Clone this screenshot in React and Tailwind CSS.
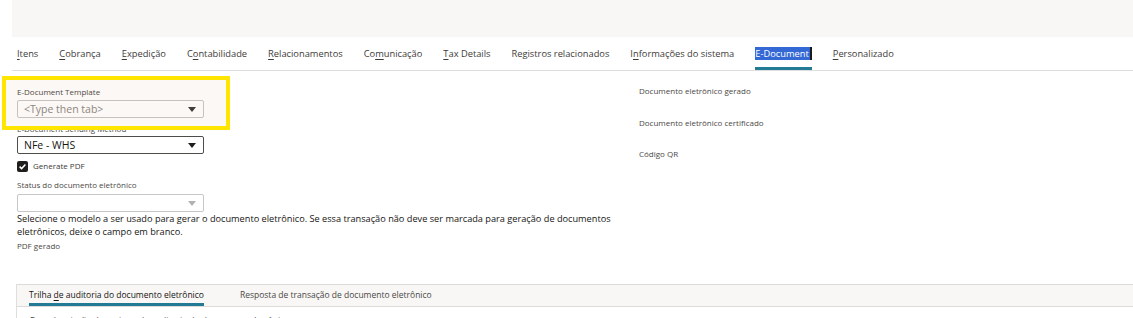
import React from 'react';

const tabs = [
  { pre: '', key: 'I', post: 'tens' },
  { pre: '', key: 'C', post: 'obrança' },
  { pre: '', key: 'E', post: 'xpedição' },
  { pre: 'C', key: 'o', post: 'ntabilidade' },
  { pre: '', key: 'R', post: 'elacionamentos' },
  { pre: 'Co', key: 'm', post: 'unicação' },
  { pre: '', key: 'T', post: 'ax Details' },
  { pre: 'Registros relacionados', key: '', post: '' },
  { pre: 'I', key: 'n', post: 'formações do sistema' },
  { pre: 'E-Document', key: '', post: '', active: true },
  { pre: '', key: 'P', post: 'ersonalizado' },
];

const Caret = ({ color }) => (
  <svg width="8" height="5" viewBox="0 0 8 5" className="shrink-0">
    <path d="M0 0 L8 0 L4 5 Z" fill={color} />
  </svg>
);

const Select = ({ value, placeholder, dark }) => (
  <div
    className={
      'w-[187px] h-[18px] rounded-[2px] border flex items-center justify-between pl-[6px] pr-[7px] ' +
      (dark ? 'border-[#4f4d4a]' : 'border-[#c9c7c5]')
    }
  >
    {value ? (
      <span className="text-[10.5px] text-[#161513] leading-none">{value}</span>
    ) : (
      <span className="text-[10.5px] text-[#8a8784] leading-none">{placeholder}</span>
    )}
    <Caret color={dark ? '#1f1e1c' : (placeholder ? '#3c3a38' : '#b4b2b0')} />
  </div>
);

const Label = ({ children, className = '' }) => (
  <div className={'text-[8px] leading-[12px] text-[#4a4845] ' + className}>{children}</div>
);

export default function App() {
  return (
    <div className="relative w-[1133px] h-[318px] overflow-hidden bg-white font-['Open_Sans',sans-serif]">
      <div className="ml-3 h-[37px] bg-[#f8f7f5]" />

      <div className="ml-3 h-[34px] border-b border-[#dfdedd] flex items-stretch pl-[5px] gap-[21px]">
        {tabs.map((t, i) => (
          <div
            key={i}
            className={
              'flex items-center border-b-[3px] pt-[2px] text-[9.3px] text-[#3d3b38] ' +
              (t.active ? 'border-[#227a94]' : 'border-transparent')
            }
          >
            {t.active ? (
              <span className="bg-[#3468d4] text-white border-r-2 border-[#1a1a1a] leading-[13px] pr-[1px]">{t.pre}</span>
            ) : (
              <span className="leading-[13px]">
                {t.pre}
                {t.key && <span className="underline underline-offset-2">{t.key}</span>}
                {t.post}
              </span>
            )}
          </div>
        ))}
      </div>

      <div className="flex pl-[17px]">
        <div className="w-[622px] pt-[15px]">
          <Label>E-Document Template</Label>
          <div className="mt-[2px]">
            <Select placeholder="<Type then tab>" />
          </div>
          <Label className="mt-[5px]">E-Document Sending Method</Label>
          <div className="mt-[1px]">
            <Select value="NFe - WHS" dark />
          </div>
          <div className="mt-[6px] flex items-center gap-[5px]">
            <div className="w-[11px] h-[11px] rounded-[2px] bg-[#1f1e1c] flex items-center justify-center">
              <svg width="9" height="9" viewBox="0 0 9 9">
                <path d="M1.6 4.6 L3.6 6.6 L7.4 2.4" stroke="white" strokeWidth="1.5" fill="none" />
              </svg>
            </div>
            <span className="text-[8px] text-[#3d3b38]">Generate PDF</span>
          </div>
          <Label className="mt-[7px]">Status do documento eletrônico</Label>
          <div className="mt-[3px]">
            <Select value="" />
          </div>
          <p className="w-[610px] text-[9.2px] leading-[13px] text-[#161513]">
            Selecione o modelo a ser usado para gerar o documento eletrônico. Se essa transação não deve ser marcada para geração de documentos eletrônicos, deixe o campo em branco.
          </p>
          <Label className="mt-[2px]">PDF gerado</Label>
        </div>

        <div className="pt-[14px] flex flex-col">
          <Label>Documento eletrônico gerado</Label>
          <Label className="mt-[20px]">Documento eletrônico certificado</Label>
          <Label className="mt-[19px]">Código QR</Label>
        </div>
      </div>

      <div className="ml-[16px] mt-[32px] border-l border-[#dfdedd]">
        <div className="h-[23px] bg-[#f8f7f5] border-y border-[#dcdbda] flex items-stretch pl-[12px] gap-[36px]">
          <div className="flex items-center border-b-[3px] border-[#227a94] pt-[2px] text-[8.5px] text-[#161513]">
            <span>Trilha <span className="underline underline-offset-2">d</span>e auditoria do documento eletrônico</span>
          </div>
          <div className="flex items-center border-b-[3px] border-transparent pt-[2px] text-[8.5px] text-[#4a4845]">
            Resposta de transação de documento eletrônico
          </div>
        </div>
        <div className="pl-[13px] pt-[8px] text-[8.5px] text-[#4a4845] leading-[12px]">
          Data de criação do registro de auditoria do documento eletrônico
        </div>
      </div>

      <div className="pointer-events-none absolute left-[2px] top-[76px] w-[228px] h-[54px] border-4 border-[#ffe500] bg-[#c87d3c]/[0.05]" />
    </div>
  );
}
